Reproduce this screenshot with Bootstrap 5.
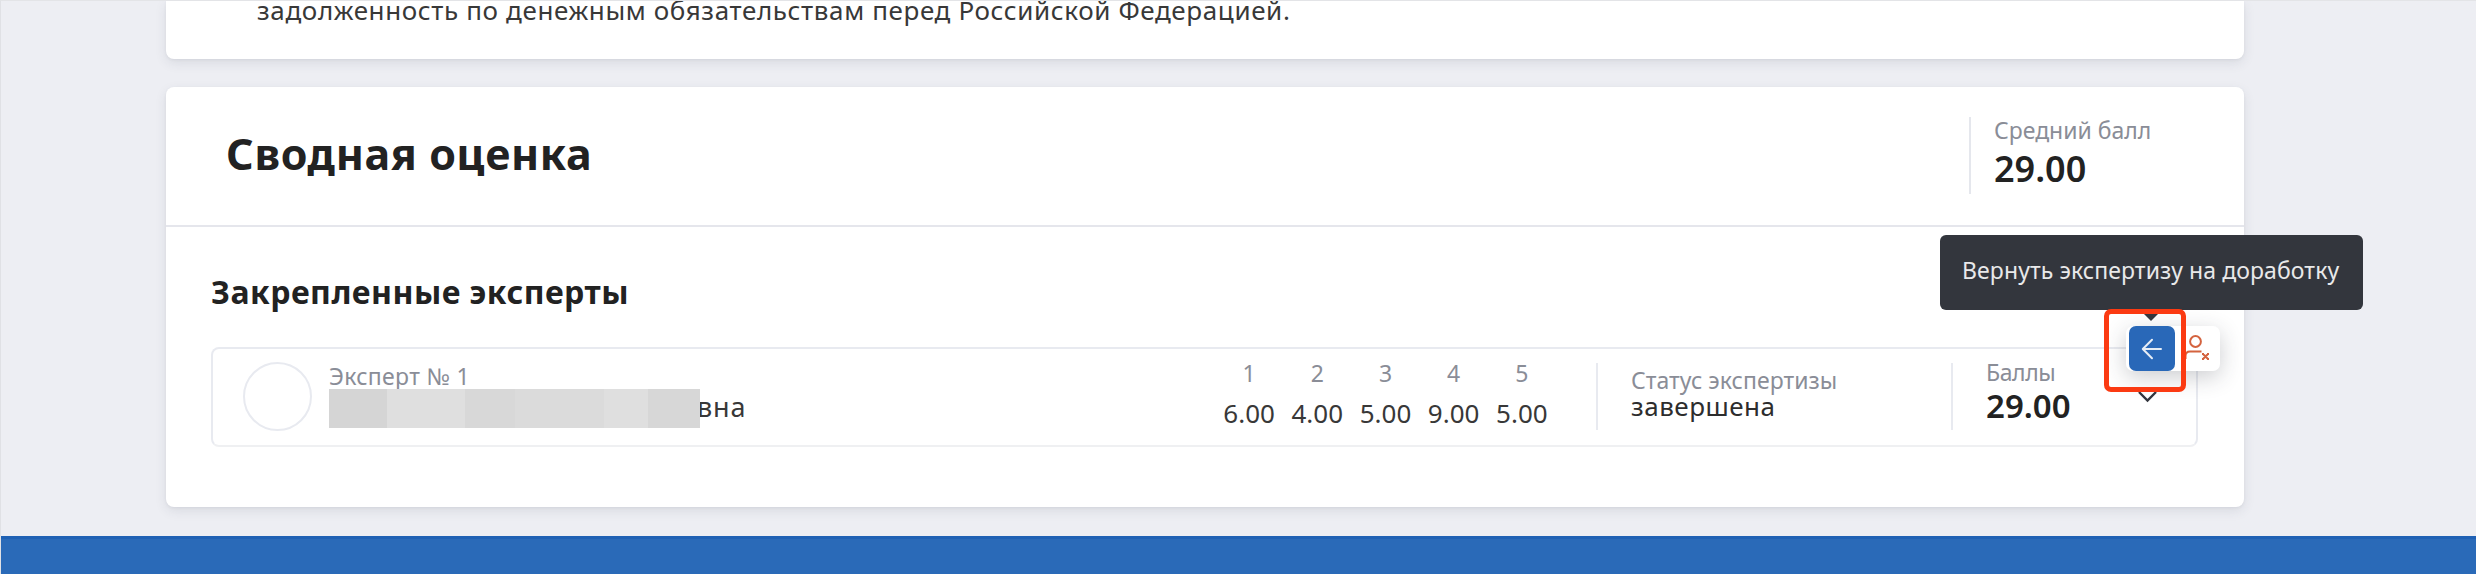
<!DOCTYPE html>
<html lang="ru">
<head>
<meta charset="utf-8">
<meta name="viewport" content="width=device-width, initial-scale=1">
<title>Сводная оценка</title>
<link href="https://cdn.jsdelivr.net/npm/bootstrap@5.3.0/dist/css/bootstrap.min.css" rel="stylesheet">
<style>
body{background:#edeef3;color:#383838;font-family:"Noto Sans","Open Sans",sans-serif;height:574px;overflow:hidden;border-top:1px solid #e3e4e7;border-left:1px solid #e0e1e5}
.page-col{width:2078px;margin-left:165px}
.panel{background:#fff;box-shadow:0 4px 12px rgba(50,55,75,.1),0 1px 3px rgba(50,55,75,.06)}
.panel-prev{height:58px;border-radius:0 0 8px 8px;padding-left:91px}
.panel-prev p{font-size:26px;line-height:19px;letter-spacing:.63px;white-space:nowrap}
.panel-main{margin-top:28px;border-radius:8px;height:420px}
.panel-head{height:140px;border-bottom:2px solid #e5e6ec;padding:0 60px 4px 60px}
.panel-head h1{font-size:43px;font-weight:700;color:#222;line-height:50px;letter-spacing:.65px}
.avg{height:77px;border-left:2px solid #e5e7ed;width:215px;padding-left:23px;margin-top:3px}
.avg .cap{line-height:30px;margin-top:-2px}
.avg .num{font-size:36px;line-height:48px}
.cap{color:#8a8d97;font-size:23px;white-space:nowrap}
.num{color:#222;font-weight:600;white-space:nowrap}
.panel-content{padding:45px 46px 0 45px}
.panel-content h2{font-size:32px;line-height:40px;font-weight:700;color:#222;letter-spacing:.47px;margin-bottom:35px}
.expert{display:grid;grid-template-columns:1002px 341px 40px 355px 1fr;height:100px;border:2px solid #e8eaf0;border-bottom-color:#eff0f2;border-radius:8px;padding-top:13px}
.avatar{width:69px;height:69px;border:2px solid #e8eaf0;border-radius:50%;margin-left:30px;margin-right:17px}
.person .cap{line-height:26px;margin-top:1px;letter-spacing:.3px}
.fio{height:39px}
.redact{width:371px;position:relative;background:linear-gradient(90deg,#d5d5d5 0 58px,#dfdfdf 0 136px,#d8d8d8 0 186px,#dbdbdb 0 275px,#dfdfdf 0 319px,#d7d7d7 0)}
.fio .tail{font-size:27px;line-height:35px;margin-left:-3px;letter-spacing:.8px}
.marks{display:grid;grid-template-columns:repeat(5,68.2px);text-align:center}
.marks .cap{line-height:22px}
.marks .val{font-size:26px;line-height:30px;margin-top:14px}
.split{border-left:2px solid #e8eaf0;height:67px;padding-left:33px;margin-top:1px}
.status .cap{line-height:26px;margin-top:4px;letter-spacing:.05px}
.status .state{font-size:26px;line-height:26px;color:#2d2d2d;letter-spacing:.5px}
.total .cap{line-height:26px;margin-top:-4px;letter-spacing:-.4px}
.total .num{font-size:33px;line-height:42px}
.overlay-tip{position:absolute;left:1940px;top:235px;width:423px;height:75px;background:#33363d;border-radius:6px;color:#e9e9ea;font-size:23px;line-height:70px;z-index:5;padding-left:22px;letter-spacing:.1px;white-space:nowrap}
.tools{position:absolute;left:2126px;top:326px;width:94px;height:45px;background:#fff;border-radius:7px;box-shadow:0 6px 22px rgba(40,45,60,.24);z-index:3;padding-left:3px}
.tool-back{width:46px;height:45px;background:#2968b8;border-radius:7px}
.highlight{position:absolute;left:2104px;top:309px;width:82px;height:83px;border:5px solid #fb3a12;border-radius:7px;z-index:7}
.tip-arrow{position:absolute;left:2143px;top:313px;z-index:6}
.chev{position:absolute;left:2137px;top:390px;z-index:2}
.footer-bar{margin-top:29px;margin-left:-1px;height:40px;background:#2a6ab8;border-top:3px solid #1f61b4}
</style>
</head>
<body>
<main class="page-col">
  <section class="panel panel-prev"><p class="mb-0">задолженность по денежным обязательствам перед Российской Федерацией.</p></section>
  <section class="panel panel-main">
    <header class="panel-head d-flex align-items-center justify-content-between">
      <h1 class="mb-0">Сводная оценка</h1>
      <div class="avg d-flex flex-column"><div class="cap">Средний балл</div><div class="num">29.00</div></div>
    </header>
    <div class="panel-content">
      <h2>Закрепленные эксперты</h2>
      <div class="expert">
        <div class="person d-flex">
          <div class="avatar flex-shrink-0"></div>
          <div>
            <div class="cap">Эксперт № 1</div>
            <div class="fio d-flex"><div class="redact z-1"></div><div class="tail">вна</div></div>
          </div>
        </div>
        <div class="marks">
          <div><div class="cap">1</div><div class="val">6.00</div></div>
          <div><div class="cap">2</div><div class="val">4.00</div></div>
          <div><div class="cap">3</div><div class="val">5.00</div></div>
          <div><div class="cap">4</div><div class="val">9.00</div></div>
          <div><div class="cap">5</div><div class="val">5.00</div></div>
        </div>
        <div></div>
        <div class="split status"><div class="cap">Статус экспертизы</div><div class="state">завершена</div></div>
        <div class="split total"><div class="cap">Баллы</div><div class="num">29.00</div></div>
      </div>
    </div>
  </section>
</main>
<footer class="footer-bar"></footer>

<svg class="chev" width="21" height="14" viewBox="0 0 21 14" fill="none" stroke="#33363f" stroke-width="2.4"><path d="M2 2l8.500 8.500L19 2"/></svg>
<div class="tools d-flex">
  <div class="tool-back d-flex align-items-center justify-content-center">
    <svg width="22" height="22" viewBox="0 0 22 22" fill="none" stroke="#e6edf6" stroke-width="2" stroke-linecap="round" stroke-linejoin="round"><path d="M20 11H2M11 1.800L1.800 11l9.200 9.200"/></svg>
  </div>
  <svg width="45" height="45" viewBox="0 0 45 45" fill="none" stroke="#d4633f" stroke-width="2"><circle cx="20.500" cy="15.500" r="5.400"/><path d="M10.500 33v-3q0-4.500 4.500-4.500H26.500M28 28l5 5M33 28l-5 5M27 28h2M32 28h2M27 33h2M32 33h2"/></svg>
</div>
<div class="overlay-tip">Вернуть экспертизу на доработку</div>
<svg class="tip-arrow" width="16" height="8" viewBox="0 0 16 8"><path d="M0 0h16L8 8z" fill="#33363d"/></svg>
<div class="highlight"></div>
<script src="https://cdn.jsdelivr.net/npm/bootstrap@5.3.0/dist/js/bootstrap.bundle.min.js"></script>
</body>
</html>
